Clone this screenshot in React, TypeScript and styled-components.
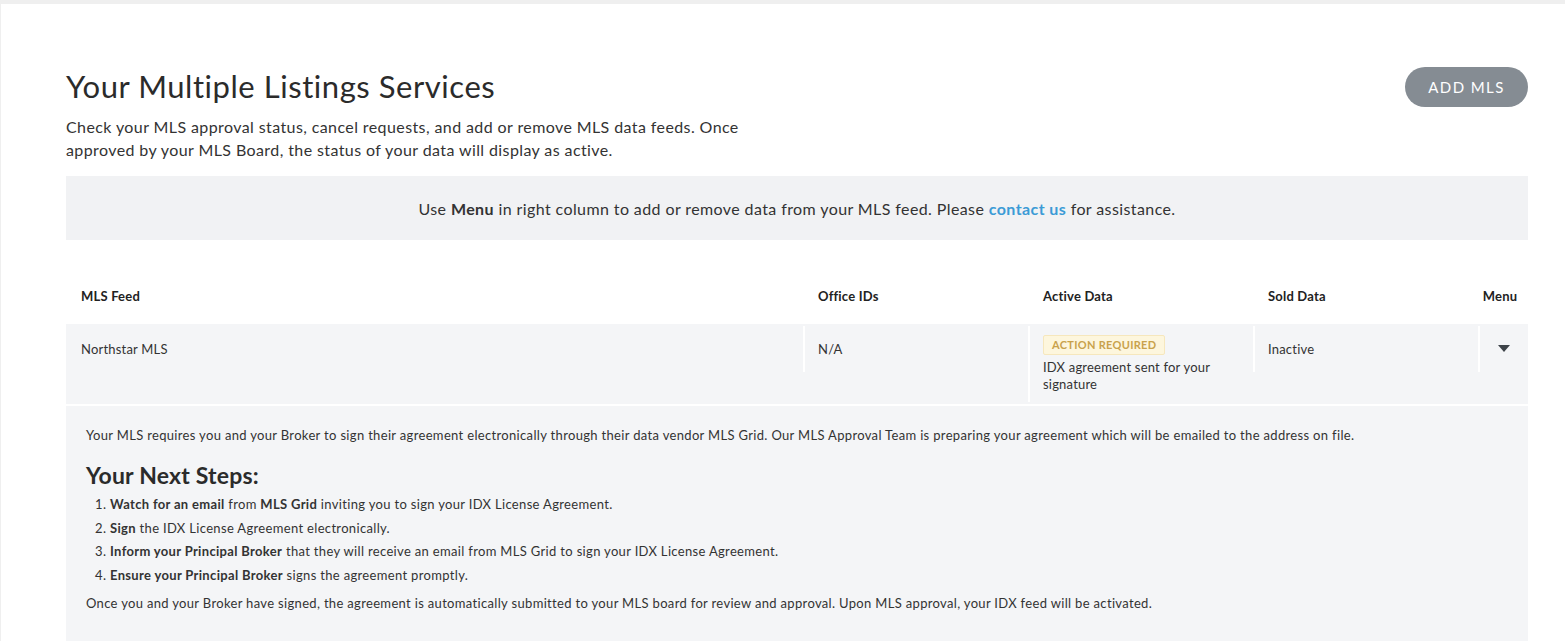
import React from "react";
import styled, { createGlobalStyle } from "styled-components";

const GlobalStyle = createGlobalStyle`
  html, body {
    margin: 0;
    padding: 0;
    background: #efefef;
  }
  body {
    font-family: Lato, "Noto Sans", sans-serif;
    color: #333;
    -webkit-font-smoothing: antialiased;
  }
  * { box-sizing: border-box; }
`;

const Shell = styled.div`
  padding: 4px 0 0 1px;
  min-height: 641px;
`;

const Card = styled.main`
  background: #fff;
  min-height: 637px;
  padding: 62px 37px 0 65px;
`;

const HeaderRow = styled.div`
  display: flex;
  justify-content: space-between;
  align-items: flex-start;
`;

const Title = styled.h1`
  margin: 0;
  font-size: 31px;
  line-height: 40px;
  font-weight: 400;
  letter-spacing: 0.55px;
  color: #2b2b2b;
`;

const Lead = styled.p`
  margin: 9px 0 0;
  font-size: 16px;
  line-height: 23px;
  letter-spacing: 0.4px;
  color: #333;
`;

const AddButton = styled.button`
  margin-top: 1px;
  height: 40px;
  width: 123px;
  border: none;
  border-radius: 20px;
  background: #858c93;
  color: #fff;
  font-family: inherit;
  font-size: 15px;
  letter-spacing: 1.4px;
  cursor: pointer;
`;

const Notice = styled.div`
  margin-top: 15px;
  height: 64px;
  background: #f1f2f4;
  display: flex;
  align-items: center;
  justify-content: center;
  font-size: 16px;
  letter-spacing: 0.4px;
  color: #333;
`;

const Link = styled.a`
  color: #3b9bd6;
  font-weight: 700;
  text-decoration: none;
`;

const Grid = styled.div`
  display: grid;
  grid-template-columns: 1fr 225px 225px 225px 50px;
  align-items: start;
`;

const HeadRow = styled(Grid)`
  margin-top: 34px;
`;

const HeadCell = styled.div<{ $center?: boolean }>`
  padding: 12px ${(p) => (p.$center ? "6px 18px 0" : "15px 18px")};
  font-size: 13px;
  line-height: 20px;
  font-weight: 700;
  letter-spacing: 0.2px;
  color: #222;
  text-align: ${(p) => (p.$center ? "center" : "left")};
`;

const BodyRow = styled(Grid)`
  background: #f4f5f7;
  padding: 2px 0;
`;

const Cell = styled.div<{ $divider?: boolean; $tight?: boolean }>`
  padding: ${(p) => (p.$tight ? "8px" : "13px")} 15px ${(p) => (p.$tight ? "9px" : "13px")}
    ${(p) => (p.$divider ? "13px" : "15px")};
  border-left: ${(p) => (p.$divider ? "2px solid #fff" : "none")};
  font-size: 13px;
  line-height: 20px;
  letter-spacing: 0.2px;
  color: #333;
`;

const MenuCell = styled(Cell)`
  display: flex;
  justify-content: center;
  padding: 19px 0 20px;
`;

const Caret = styled.span`
  width: 0;
  height: 0;
  border-left: 6.5px solid transparent;
  border-right: 6.5px solid transparent;
  border-top: 7px solid #3d4349;
`;

const Badge = styled.span`
  display: inline-block;
  height: 20px;
  padding: 0 8px;
  border: 1px solid #f6e7bd;
  border-radius: 2px;
  background: #fdf6dd;
  color: #c9a24c;
  font-size: 11px;
  line-height: 18px;
  font-weight: 700;
  letter-spacing: 0.3px;
`;

const Note = styled.div`
  margin-top: 4px;
  line-height: 17px;
`;

const Details = styled.section`
  margin-top: 2px;
  background: #f4f5f7;
  padding: 19px 20px 30px;
  font-size: 13px;
  line-height: 20px;
  letter-spacing: 0.33px;
  color: #333;
  min-height: 240px;
`;

const Para = styled.p<{ $gap?: number }>`
  margin: ${(p) => p.$gap ?? 0}px 0 0;
`;

const StepsTitle = styled.h2`
  margin: 16px 0 0;
  font-size: 23px;
  line-height: 28px;
  font-weight: 700;
  letter-spacing: 0.2px;
  color: #2b2b2b;
`;

const Steps = styled.ol`
  margin: 4px 0 0;
  padding-left: 24px;
  line-height: 23.5px;
`;

export default function App() {
  return (
    <>
      <GlobalStyle />
      <Shell>
        <Card>
          <HeaderRow>
            <div>
              <Title>Your Multiple Listings Services</Title>
              <Lead>
                Check your MLS approval status, cancel requests, and add or remove MLS data feeds. Once
                <br />
                approved by your MLS Board, the status of your data will display as active.
              </Lead>
            </div>
            <AddButton>ADD MLS</AddButton>
          </HeaderRow>

          <Notice>
            <span>
              Use <b>Menu</b> in right column to add or remove data from your MLS feed. Please{" "}
              <Link href="#">contact us</Link> for assistance.
            </span>
          </Notice>

          <HeadRow>
            <HeadCell>MLS Feed</HeadCell>
            <HeadCell>Office IDs</HeadCell>
            <HeadCell>Active Data</HeadCell>
            <HeadCell>Sold Data</HeadCell>
            <HeadCell $center>Menu</HeadCell>
          </HeadRow>

          <BodyRow>
            <Cell>Northstar MLS</Cell>
            <Cell $divider>N/A</Cell>
            <Cell $divider $tight>
              <Badge>ACTION REQUIRED</Badge>
              <Note>
                IDX agreement sent for your
                <br />
                signature
              </Note>
            </Cell>
            <Cell $divider>Inactive</Cell>
            <MenuCell $divider>
              <Caret />
            </MenuCell>
          </BodyRow>

          <Details>
            <Para>
              Your MLS requires you and your Broker to sign their agreement electronically through their data
              vendor MLS Grid. Our MLS Approval Team is preparing your agreement which will be emailed to the
              address on file.
            </Para>
            <StepsTitle>Your Next Steps:</StepsTitle>
            <Steps>
              <li>
                <b>Watch for an email</b> from <b>MLS Grid</b> inviting you to sign your IDX License Agreement.
              </li>
              <li>
                <b>Sign</b> the IDX License Agreement electronically.
              </li>
              <li>
                <b>Inform your Principal Broker</b> that they will receive an email from MLS Grid to sign your IDX
                License Agreement.
              </li>
              <li>
                <b>Ensure your Principal Broker</b> signs the agreement promptly.
              </li>
            </Steps>
            <Para $gap={6}>
              Once you and your Broker have signed, the agreement is automatically submitted to your MLS board for
              review and approval. Upon MLS approval, your IDX feed will be activated.
            </Para>
          </Details>
        </Card>
      </Shell>
    </>
  );
}
